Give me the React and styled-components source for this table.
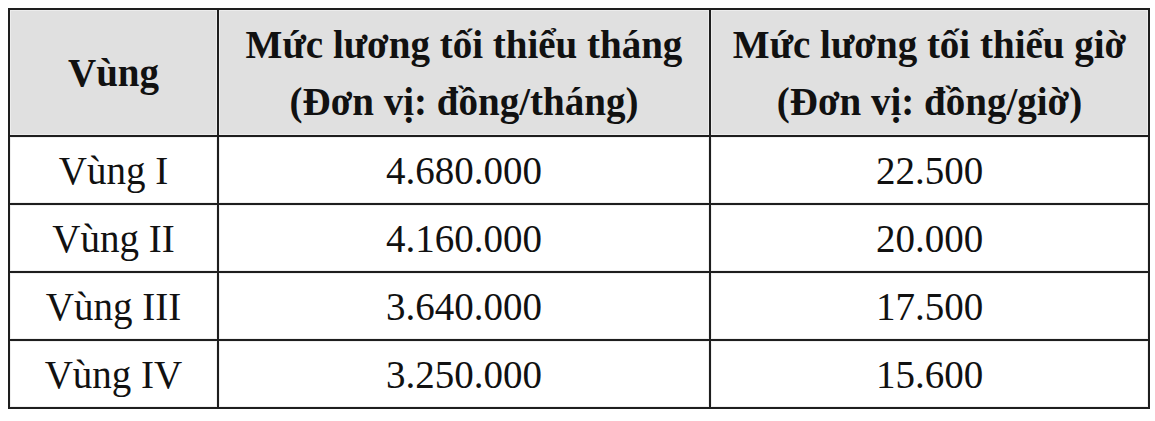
import React from 'react'
import styled, { createGlobalStyle } from 'styled-components'

const GlobalStyle = createGlobalStyle`
  html, body {
    margin: 0;
    background: #ffffff;
  }
`

const rows = [
  { region: 'Vùng I', month: '4.680.000', hour: '22.500' },
  { region: 'Vùng II', month: '4.160.000', hour: '20.000' },
  { region: 'Vùng III', month: '3.640.000', hour: '17.500' },
  { region: 'Vùng IV', month: '3.250.000', hour: '15.600' },
]

const App = () => {
  return (
    <Wrapper>
      <GlobalStyle />
      <Table>
        <colgroup>
          <col style={{ width: 209 }} />
          <col style={{ width: 492 }} />
          <col style={{ width: 439 }} />
        </colgroup>
        <thead>
          <tr>
            <HeadCell>Vùng</HeadCell>
            <HeadCell>
              Mức lương tối thiểu tháng
              <br />
              (Đơn vị: đồng/tháng)
            </HeadCell>
            <HeadCell>
              Mức lương tối thiểu giờ
              <br />
              (Đơn vị: đồng/giờ)
            </HeadCell>
          </tr>
        </thead>
        <tbody>
          {rows.map((r) => (
            <tr key={r.region}>
              <Cell>{r.region}</Cell>
              <Cell>{r.month}</Cell>
              <Cell>{r.hour}</Cell>
            </tr>
          ))}
        </tbody>
      </Table>
    </Wrapper>
  )
}

const Wrapper = styled.div`
  padding: 8px;
`

const Table = styled.table`
  width: 1140px;
  table-layout: fixed;
  border-collapse: collapse;
  font-family: "Liberation Serif", "Times New Roman", serif;
  color: #111111;
`

const HeadCell = styled.th`
  height: 125px;
  padding: 0;
  border: 2px solid #1e1e1e;
  background: #e0e0e0;
  box-shadow: inset 0 0 0 1px #ececec;
  font-size: 39px;
  font-weight: 700;
  line-height: 57px;
  text-align: center;
  vertical-align: middle;
`

const Cell = styled.td`
  height: 66px;
  padding: 0;
  border: 2px solid #1e1e1e;
  box-shadow: inset 0 0 0 1px #f0f0f0;
  font-size: 39px;
  text-align: center;
  vertical-align: middle;
`

export default App
